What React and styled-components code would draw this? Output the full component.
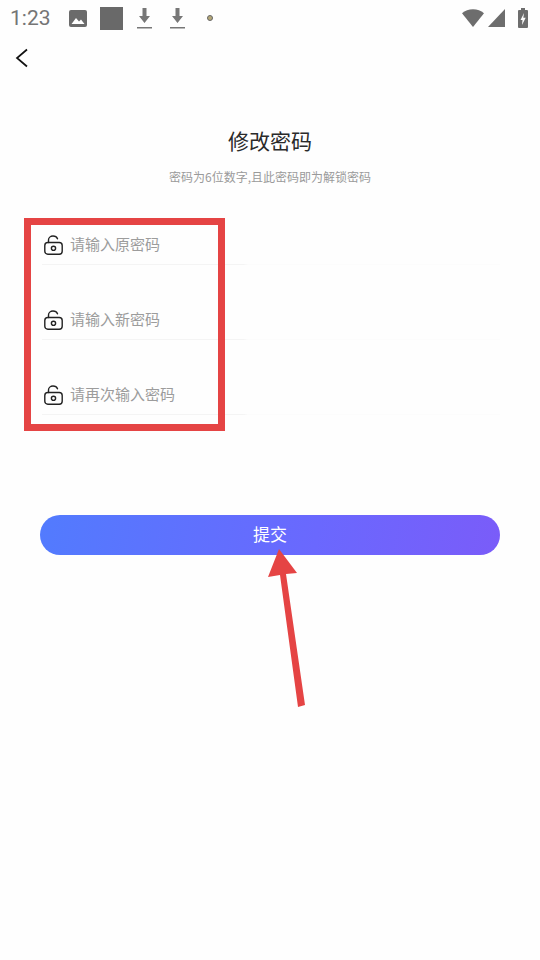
import React from "react";
import styled, { createGlobalStyle } from "styled-components";

const GlobalStyle = createGlobalStyle`
    html, body {
        margin: 0;
        padding: 0;
        background: #fefefe;
    }
    body {
        font-family: "Noto Sans CJK SC", "Liberation Sans", sans-serif;
    }
`;

function LockIcon() {
    return (
        <svg width="19" height="20" viewBox="0 0 19 20" fill="none" stroke="#222" strokeWidth="1.4">
            <path d="M4.500 7.500V5C4.500 2.800 6.500 1 9 1c2 0 3.800 1 4.500 2.800" strokeLinecap="round" />
            <rect x="0.800" y="7.500" width="17.400" height="11.700" rx="3" />
            <circle cx="9.500" cy="13.300" r="2.100" />
        </svg>
    );
}

function DownloadIcon() {
    return (
        <svg width="20" height="21" viewBox="0 0 20 21">
            <path d="M6.500 0h4v8H14l-5.500 7L3 8h3.500z" fill="#777" />
            <rect x="1" y="19" width="15" height="1.500" fill="#777" />
        </svg>
    );
}

function App() {
    const fields = ["请输入原密码", "请输入新密码", "请再次输入密码"];

    return (
        <Page>
            <GlobalStyle />
            <StatusBar>
                <Clock>1:23</Clock>
                <StatusIcons>
                    <svg width="18" height="17" viewBox="0 0 18 17">
                        <rect width="18" height="17" rx="2" fill="#6b6b6b" />
                        <path d="M2.500 14l4.500-6 3 3.500 2-2 3.500 4.500z" fill="#fff" />
                    </svg>
                    <GreySquare />
                    <DownloadIcon />
                    <DownloadIcon />
                    <Dot />
                </StatusIcons>
                <SystemIcons>
                    <svg width="22" height="18" viewBox="0 0 22 18">
                        <path d="M0 4.200C3 1.600 6.800 0.300 11 0.300s8 1.300 11 3.900L11 18z" fill="#6d6d6d" />
                    </svg>
                    <svg width="17" height="18" viewBox="0 0 17 18">
                        <path d="M0 18L17 0v18z" fill="#6d6d6d" />
                    </svg>
                    <Battery width="10" height="20" viewBox="0 0 10 20">
                        <path d="M3 0h4v2h2a1 1 0 0 1 1 1v16a1 1 0 0 1-1 1H1a1 1 0 0 1-1-1V3a1 1 0 0 1 1-1h2z" fill="#6d6d6d" />
                        <path d="M6 5L2.500 12h2L4 17l3.700-7.200H5.300z" fill="#fff" />
                    </Battery>
                </SystemIcons>
            </StatusBar>

            <BackRow>
                <svg width="14" height="20" viewBox="0 0 14 20" fill="none" stroke="#111" strokeWidth="1.700">
                    <path d="M12 1.500L2 10l10 8.500" />
                </svg>
            </BackRow>

            <Title>修改密码</Title>
            <Subtitle>密码为6位数字,且此密码即为解锁密码</Subtitle>

            <Fields>
                {fields.map((text) => (
                    <Field key={text}>
                        <LockIcon />
                        <Placeholder>{text}</Placeholder>
                    </Field>
                ))}
            </Fields>

            <Submit>提交</Submit>

            <Highlight />
            <Arrow width="60" height="170" viewBox="0 0 60 170">
                <path d="M19 4L8 32 20 30 38 162 45 160 26 29 37 28z" fill="#e54444" />
            </Arrow>
        </Page>
    );
}

const Page = styled.div`
    position: relative;
    width: 540px;
    height: 960px;
    overflow: hidden;
    background: #fefefe;
`;

const StatusBar = styled.div`
    height: 36px;
    display: flex;
    align-items: center;
    padding: 0 12px 0 10px;
`;

const Clock = styled.div`
    font-family: Roboto, "Liberation Sans", sans-serif;
    font-size: 21px;
    color: #757575;
    width: 59px;
`;

const StatusIcons = styled.div`
    display: flex;
    align-items: center;
    gap: 13px;
    flex: 1;
`;

const GreySquare = styled.div`
    width: 23px;
    height: 23px;
    background: #696969;
`;

const Dot = styled.div`
    width: 4px;
    height: 4px;
    margin-left: 5px;
    border-radius: 50%;
    border: 1px solid #666;
    background: #b5a878;
`;

const SystemIcons = styled.div`
    display: flex;
    align-items: center;
    gap: 4px;
`;

const Battery = styled.svg`
    margin-left: 9px;
`;

const BackRow = styled.div`
    height: 44px;
    padding-left: 15px;
    display: flex;
    align-items: center;
`;

const Title = styled.div`
    margin-top: 45px;
    text-align: center;
    font-size: 21px;
    line-height: 30px;
    color: #2a2a2a;
`;

const Subtitle = styled.div`
    margin-top: 13px;
    text-align: center;
    font-size: 12px;
    line-height: 18px;
    color: #9a9a9a;
`;

const Fields = styled.div`
    margin: 41px 40px 0 42px;
    display: flex;
    flex-direction: column;
    gap: 37px;
`;

const Field = styled.div`
    height: 38px;
    padding: 0 0 2px 2px;
    box-sizing: border-box;
    display: flex;
    align-items: center;
    gap: 7px;
    border-bottom: 1px solid;
    border-image: linear-gradient(90deg, #f4f4f4 44%, #fcfcfc 45%) 1;
`;

const Placeholder = styled.div`
    font-size: 15px;
    color: #9c9c9c;
    padding-bottom: 2px;
`;

const Submit = styled.div`
    margin: 100px 40px 0;
    height: 40px;
    box-sizing: border-box;
    padding-bottom: 3px;
    border-radius: 20px;
    background: linear-gradient(100deg, #527bfe 0%, #6a68fe 60%, #7a5cf9 100%);
    color: #fff;
    font-size: 17px;
    display: flex;
    align-items: center;
    justify-content: center;
`;

const Highlight = styled.div`
    position: absolute;
    left: 24px;
    top: 218px;
    width: 201px;
    height: 213px;
    box-sizing: border-box;
    border: 7px solid #e54444;
`;

const Arrow = styled.svg`
    position: absolute;
    left: 260px;
    top: 545px;
`;

export default App;
